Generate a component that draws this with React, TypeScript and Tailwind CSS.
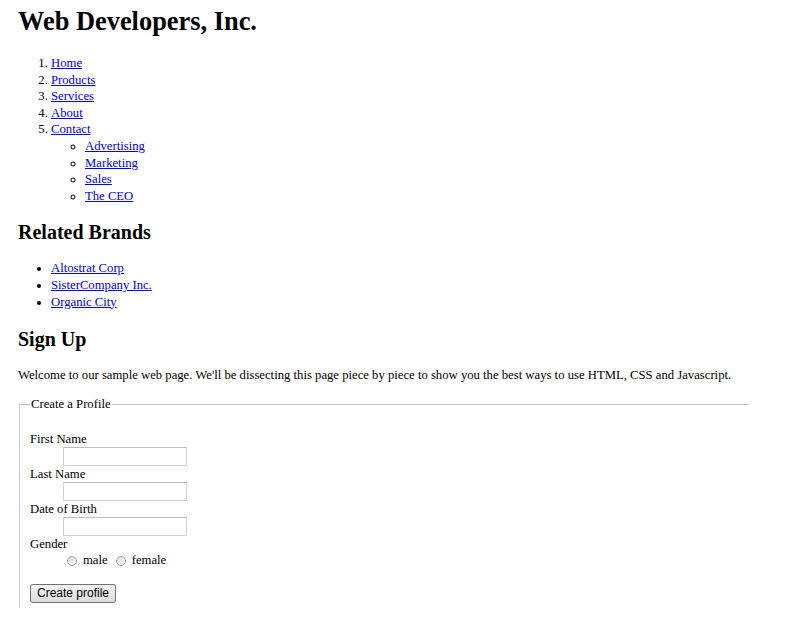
import React from "react";

const nav = ["Home", "Products", "Services", "About"];
const sub = ["Advertising", "Marketing", "Sales", "The CEO"];
const brands = ["Altostrat Corp", "SisterCompany Inc.", "Organic City"];

function Field({ label }: { label: string }) {
  return (
    <div>
      <div className="h-[16px] leading-[16.6px]">{label}</div>
      <input
        type="text"
        className="block ml-[33px] w-[124px] h-[19px] border border-[#d2d2d2] border-t-[#bdbdbd] bg-white"
      />
    </div>
  );
}

function Radio({ label }: { label: string }) {
  return (
    <span className="inline-flex items-center">
      <span className="w-[10px] h-[10px] rounded-full border border-[#a3a3a3] bg-gradient-to-br from-[#dedede] to-[#fafafa]" />
      <span className="ml-[6px]">{label}</span>
    </span>
  );
}

export default function App() {
  return (
    <div className="min-h-[640px] bg-white text-black px-[18px] pt-[6px] font-['Liberation_Serif',_'Times_New_Roman',serif] text-[12.7px]">
      <h1 className="text-[26.4px] font-bold leading-[30px]">Web Developers, Inc.</h1>

      <ol className="mt-[19px] pl-[33px] list-decimal leading-[16.6px]">
        {nav.map((n) => (
          <li key={n}>
            <a href="#" className="text-[#0000ee] underline">{n}</a>
          </li>
        ))}
        <li>
          <a href="#" className="text-[#0000ee] underline">Contact</a>
          <ul className="pl-[34px] list-[circle]">
            {sub.map((s) => (
              <li key={s}>
                <a href="#" className="text-[#0000ee] underline">{s}</a>
              </li>
            ))}
          </ul>
        </li>
      </ol>

      <h2 className="mt-[16px] text-[20px] font-bold leading-[24px]">Related Brands</h2>
      <ul className="mt-[16px] pl-[33px] list-disc leading-[16.6px]">
        {brands.map((b) => (
          <li key={b}>
            <a href="#" className="text-[#0000ee] underline">{b}</a>
          </li>
        ))}
      </ul>

      <h2 className="mt-[16.5px] text-[20px] font-bold leading-[24px]">Sign Up</h2>
      <p className="mt-[16.7px] leading-[16.6px]">
        Welcome to our sample web page. We'll be dissecting this page piece by piece to show you the best ways to use HTML, CSS and Javascript.
      </p>

      <fieldset className="mt-[12px] ml-[1px] w-[730px] h-[212px] border-l border-t border-[#c6c6c6] px-[10px]">
        <legend className="px-[1px] leading-[16.6px]">Create a Profile</legend>
        <div className="pt-[18px]">
          <Field label="First Name" />
          <Field label="Last Name" />
          <Field label="Date of Birth" />
          <div className="h-[16px] leading-[16.6px]">Gender</div>
          <div className="flex items-center gap-[8px] ml-[37px] h-[18px] pt-[1px]">
            <Radio label="male" />
            <Radio label="female" />
          </div>
          <button
            type="button"
            className="mt-[14px] h-[19px] w-[86px] rounded-[3px] border border-[#707070] bg-gradient-to-b from-[#f4f4f4] to-[#dddddd] font-['Liberation_Sans',Arial,sans-serif] text-[12px] leading-[16px]"
          >
            Create profile
          </button>
        </div>
      </fieldset>
    </div>
  );
}
